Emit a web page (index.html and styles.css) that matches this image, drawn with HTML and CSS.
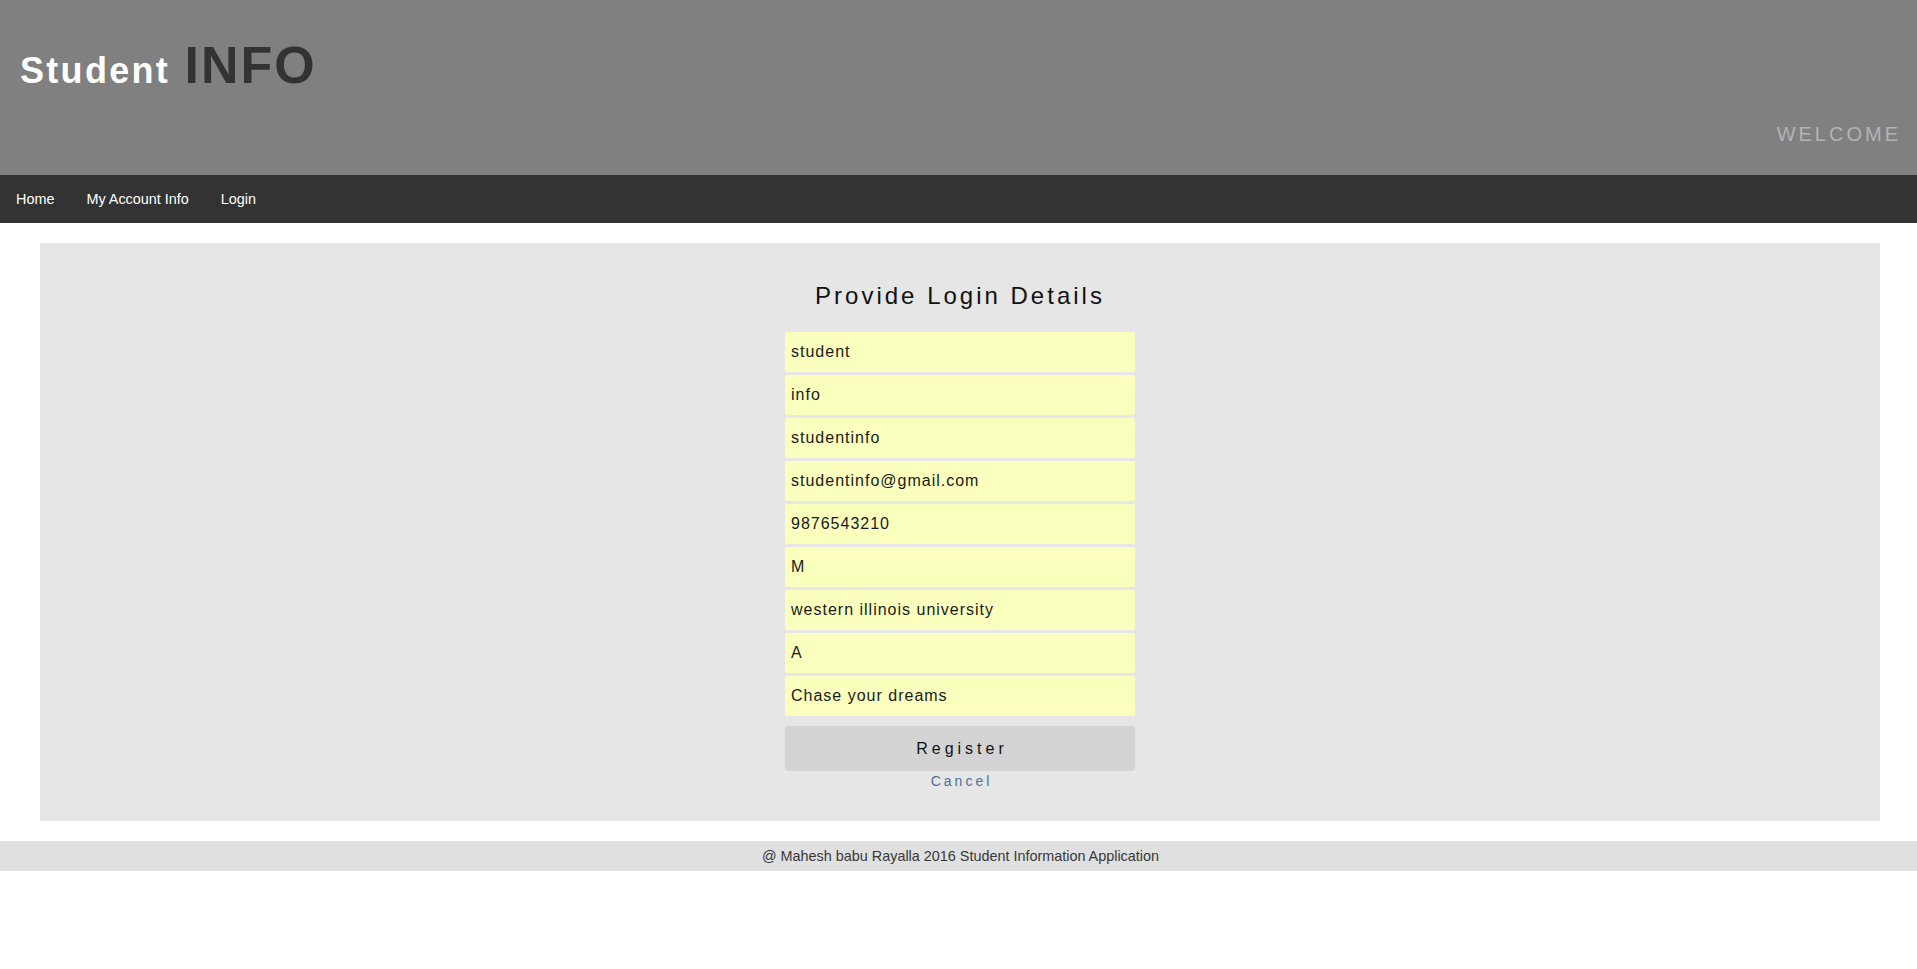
FILE: index.html
```html
<!DOCTYPE html>
<html lang="en">
<head>
<meta charset="utf-8">
<title>Student INFO</title>
<link rel="stylesheet" href="styles.css">
</head>
<body>
<header class="site-header">
  <h1 class="brand"><span class="brand-student">Student</span> <span class="brand-info">INFO</span></h1>
  <div class="welcome">WELCOME</div>
</header>
<nav class="main-nav">
  <a href="#" class="nav-link">Home</a>
  <a href="#" class="nav-link">My Account Info</a>
  <a href="#" class="nav-link">Login</a>
</nav>
<main class="content">
  <h2 class="form-title">Provide Login Details</h2>
  <form class="login-form">
    <input class="field" type="text" value="student">
    <input class="field" type="text" value="info">
    <input class="field" type="text" value="studentinfo">
    <input class="field" type="text" value="studentinfo@gmail.com">
    <input class="field" type="text" value="9876543210">
    <input class="field" type="text" value="M">
    <input class="field" type="text" value="western illinois university">
    <input class="field" type="text" value="A">
    <input class="field" type="text" value="Chase your dreams">
    <button class="register-btn" type="button">Register</button>
    <a href="#" class="cancel-link">Cancel</a>
  </form>
</main>
<footer class="site-footer">@ Mahesh babu Rayalla 2016 Student Information Application</footer>
</body>
</html>
```
FILE: styles.css
```css
* { box-sizing: border-box; }
html, body {
  margin: 0;
  padding: 0;
  background: #ffffff;
  font-family: "Liberation Sans", Arial, sans-serif;
}
.site-header {
  background: #808080;
  height: 175px;
  padding: 39px 16px 0 20px;
  display: flex;
  flex-direction: column;
}
.brand {
  margin: 0;
  line-height: 1;
  font-size: 52px;
  font-weight: normal;
  height: 52px;
  white-space: nowrap;
}
.brand-student {
  font-size: 36px;
  font-weight: bold;
  color: #ffffff;
  letter-spacing: 2.3px;
}
.brand-info {
  font-size: 52px;
  font-weight: bold;
  color: #333333;
  letter-spacing: 2px;
}
.welcome {
  margin-top: 33px;
  align-self: flex-end;
  font-size: 20px;
  line-height: 1;
  letter-spacing: 3px;
  color: #b3b3b3;
}
.main-nav {
  background: #333333;
  height: 48px;
  display: flex;
  align-items: center;
}
.nav-link {
  color: #ffffff;
  text-decoration: none;
  font-size: 14.4px;
  line-height: 16px;
  padding: 0 16px;
}
.content {
  background: #e6e6e6;
  margin: 20px 37px 20px 40px;
  padding: 39px 0 33px;
  display: flex;
  flex-direction: column;
  align-items: center;
}
.form-title {
  margin: 0 0 22px;
  font-size: 24px;
  font-weight: normal;
  letter-spacing: 3px;
  color: #111111;
  line-height: normal;
}
.login-form {
  width: 350px;
  display: flex;
  flex-direction: column;
}
.field {
  display: block;
  width: 350px;
  height: 40px;
  margin: 0 0 3px;
  padding: 0 6px;
  border: none;
  border-radius: 2px;
  background: #faffbd;
  font-family: "Liberation Sans", Arial, sans-serif;
  font-size: 16px;
  letter-spacing: 1px;
  color: #1a1a1a;
  outline: none;
}
.register-btn {
  margin-top: 7px;
  height: 45px;
  width: 350px;
  border: none;
  border-radius: 4px;
  background: #d3d3d3;
  font-family: "Liberation Sans", Arial, sans-serif;
  font-size: 16px;
  letter-spacing: 4px;
  color: #111111;
  padding: 0 0 0 4px;
}
.cancel-link {
  margin-top: 2px;
  margin-bottom: -1px;
  align-self: center;
  font-size: 14px;
  line-height: 16px;
  letter-spacing: 3px;
  padding-left: 3px;
  color: #4d6fa0;
  text-decoration: none;
}
.site-footer {
  background: #e0e0e0;
  height: 30px;
  line-height: 30px;
  text-align: center;
  font-size: 14.4px;
  padding-left: 4px;
  color: #383838;
}
```
